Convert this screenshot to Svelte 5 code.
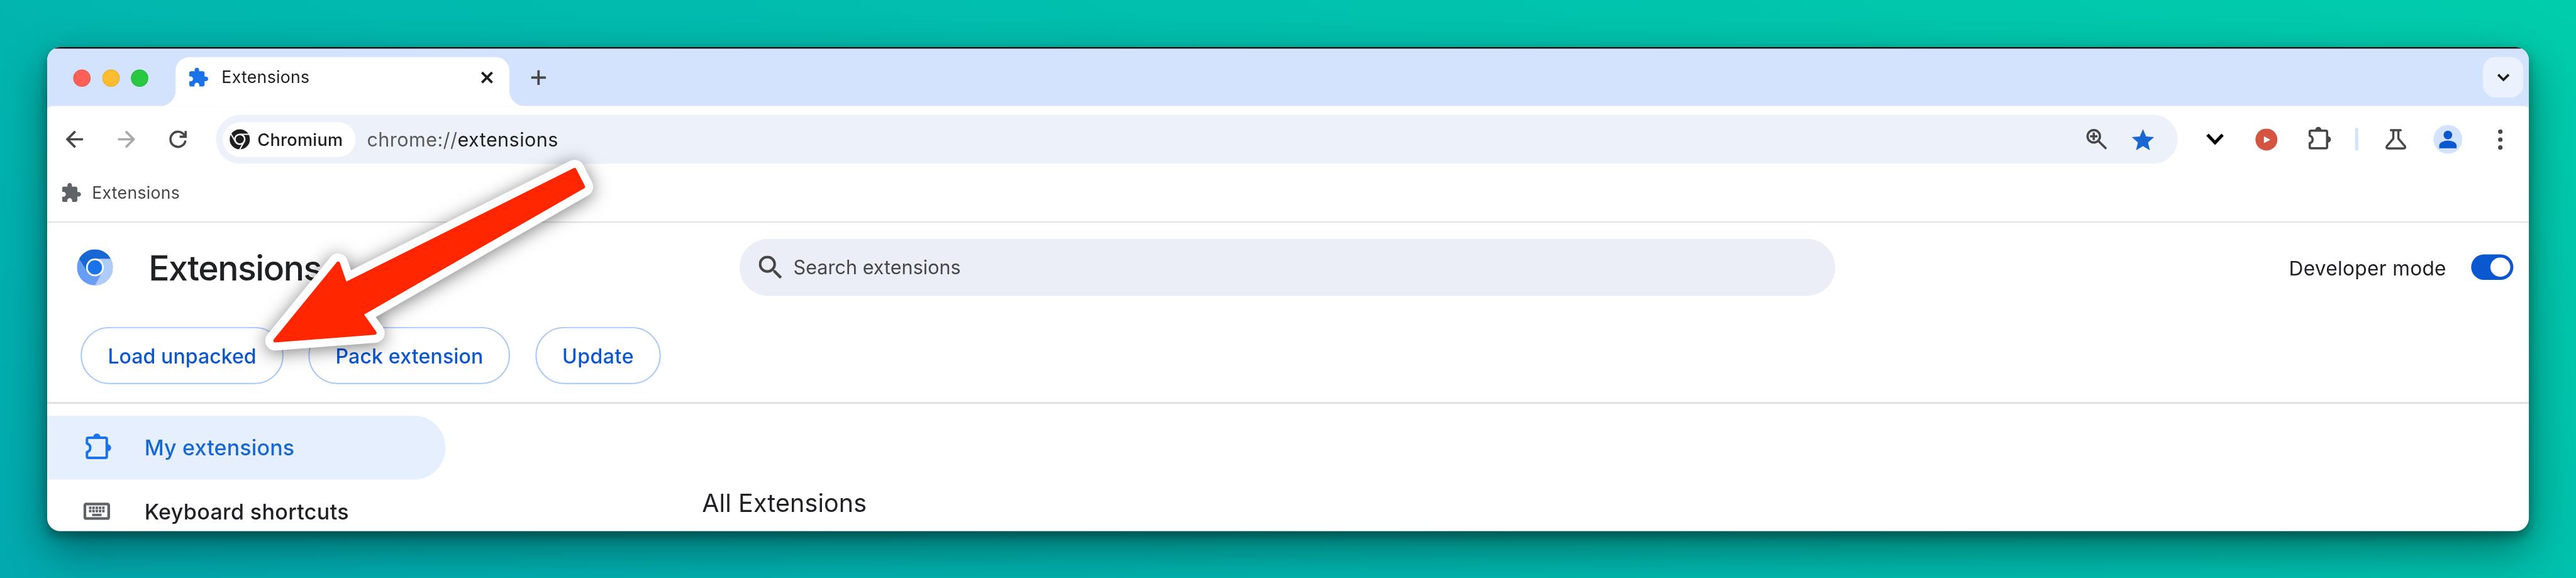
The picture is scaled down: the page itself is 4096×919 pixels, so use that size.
<script>
  const buttons = [
    { label: 'Load unpacked', width: 326.5, spacing: 0.05 },
    { label: 'Pack extension', width: 325, spacing: 0.15 },
    { label: 'Update', width: 202, spacing: 0.5 },
  ];
  const keyColumns = [143.4, 148.7, 154, 159.3, 164.6];
</script>

{#snippet puzzleFilled()}
  <svg class="puzzle" viewBox="2 1 21 21">
    <path d="M20.5 11H19V7c0-1.1-.9-2-2-2h-4V3.5C13 2.12 11.88 1 10.5 1S8 2.12 8 3.5V5H4c-1.1 0-1.99.9-1.99 2v3.8H3.5c1.49 0 2.7 1.21 2.7 2.7s-1.21 2.7-2.7 2.7H2V20c0 1.1.9 2 2 2h3.8v-1.5c0-1.49 1.21-2.7 2.7-2.7 1.49 0 2.7 1.21 2.7 2.7V22H17c1.1 0 2-.9 2-2v-4h1.5c1.38 0 2.5-1.12 2.5-2.5S21.88 11 20.5 11z" />
  </svg>
{/snippet}

{#snippet puzzleOutline()}
  <svg viewBox="0 0 38 38" class="outline">
    <path d="M2.8 14.8V8.6q0-2 2-2h24q2 0 2 2v24.4q0 2-2 2h-24q-2 0-2-2v-6.2c6.2-1.6 6.2-10.4 0-12z" fill="none" stroke="currentColor" stroke-width="3.6" stroke-linejoin="round" />
    <path d="M11.7 5.5a5 5 0 0 1 10 0zM32 15.8a5 5 0 0 1 0 10z" fill="currentColor" />
  </svg>
{/snippet}

<div class="stage">
  <div class="window">
    <div class="tabstrip">
      <div class="lights"><i class="red"></i><i class="amber"></i><i class="green"></i></div>
      <div class="tab">
        <span class="tab-icon">{@render puzzleFilled()}</span>
        <span class="tab-title">Extensions</span>
        <svg class="close" viewBox="0 0 20 20"><path d="M1.8 1.8l16.4 16.4M18.2 1.8L1.8 18.2" fill="none" stroke="#1f1f1f" stroke-width="4" /></svg>
      </div>
      <svg class="plus" viewBox="0 0 24 24"><path d="M12 0v24M0 12h24" fill="none" stroke="#474747" stroke-width="3.8" /></svg>
      <div class="tab-search">
        <svg width="22" height="14" viewBox="0 0 22 14"><path d="M2.5 2.2l8.5 8.5 8.5-8.5" fill="none" stroke="#1f1f1f" stroke-width="3.8" /></svg>
      </div>
    </div>

    <div class="toolbar">
      <svg class="nav" viewBox="106 210 28 29"><path d="M134 224.5H109M121.3 211.7l-12.8 12.8 12.8 12.8" fill="none" stroke="#474747" stroke-width="3.7" /></svg>
      <svg class="nav" viewBox="190 210 28 29"><path d="M190 224.5h25M202.7 211.7l12.8 12.8-12.8 12.8" fill="none" stroke="#a9a9a9" stroke-width="3.7" /></svg>
      <svg class="nav" viewBox="273 210 28 29"><path d="M298.9 226.5A12.2 12.2 0 1 1 297.5 218.5M299.3 211v9.4h-9.8" fill="none" stroke="#474747" stroke-width="3.7" /></svg>

      <div class="omnibox">
        <div class="chip">
          <svg width="33" height="33" viewBox="-16.5 -16.5 33 33">
            <circle r="16.3" fill="#1f1f1f" />
            <circle r="7.9" fill="none" stroke="#fff" stroke-width="2.6" />
            {#each [0, 120, 240] as turn}
              <path d="M0-8H17" fill="none" stroke="#fff" stroke-width="2" transform="rotate({turn})" />
            {/each}
          </svg>
          <span>Chromium</span>
        </div>
        <span class="url"><span class="scheme">chrome://</span>extensions</span>
        <svg class="magnify" viewBox="3362 207 35 35"><g fill="none" stroke="#474747" stroke-width="3.6"><circle cx="3374.7" cy="219.7" r="10" /><path d="M3368.7 219.7h12M3374.7 213.7v12M3381.8 226.8l13 13" /></g></svg>
        <svg class="star" viewBox="2 2 20 19"><path d="M12 17.27L18.18 21l-1.64-7.03L22 9.24l-7.19-.61L12 2 9.19 8.63 2 9.24l5.46 4.73L5.82 21z" fill="#1967d2" /></svg>
      </div>

      <svg class="chev" viewBox="3556 214 28 21"><path d="M3558 217.2l12.2 12.8 12.2-12.8" fill="none" stroke="#000" stroke-width="5.2" /></svg>
      <svg class="play" viewBox="0 0 36 36"><circle cx="18" cy="18" r="17.7" fill="#d45341" /><path d="M14 12.8l10.5 5.4-10.5 5.3z" fill="#fff" /></svg>
      <span class="ext">{@render puzzleOutline()}</span>
      <span class="divider"></span>
      <svg class="flask" viewBox="3845 207 35 35"><path d="M3854.5 209.9h16M3858.5 210v13.3L3848.1 235.6q-1.6 3.7 2.2 3.7h24.6q3.8 0 2.2-3.7L3866.7 223.3V210" fill="none" stroke="#474747" stroke-width="3.5" stroke-linecap="round" stroke-linejoin="round" /></svg>
      <svg class="avatar" viewBox="3922.5 201 47 47"><circle cx="3946" cy="224.5" r="23.3" fill="#d3e3fd" /><circle cx="3946" cy="217.5" r="7" fill="#0b57d0" /><path d="M3932 239v-4.5c0-5 8-8 14-8s14 3 14 8v4.5z" fill="#0b57d0" /></svg>
      <svg class="dots" viewBox="0 0 8 34"><circle cx="4" cy="4.2" r="3.6" /><circle cx="4" cy="17" r="3.6" /><circle cx="4" cy="29.8" r="3.6" /></svg>
    </div>

    <div class="bookmarks">
      {@render puzzleFilled()}
      <span>Extensions</span>
    </div>

    <div class="header">
      <svg class="logo" viewBox="124 401 58 58">
        <circle cx="153" cy="430" r="29" fill="#669df6" />
        <path d="M153 416h25.4A29 29 0 0 0 127.6 416L140.9 437 153 430z" fill="#1967d2" />
        <path d="M153 416h25.4A29 29 0 0 1 153 459L165.1 437 153 430z" fill="#aecbfa" />
        <circle cx="153" cy="430" r="14.3" fill="#fff" />
        <circle cx="153" cy="430" r="11.5" fill="#1a73e8" />
      </svg>
      <h1>Extensions</h1>
      <div class="search">
        <svg viewBox="3 3 17.5 17.5"><path d="M15.5 14h-.79l-.28-.27A6.471 6.471 0 0 0 16 9.5 6.5 6.5 0 1 0 9.5 16c1.61 0 3.09-.59 4.23-1.57l.27.28v.79l5 4.99L20.49 19l-4.99-5zm-6 0C7.01 14 5 11.99 5 9.5S7.01 5 9.5 5 14 7.01 14 9.5 11.99 14 9.5 14z" fill="#474747" /></svg>
        <span>Search extensions</span>
      </div>
      <span class="dev">Developer mode</span>
      <div class="toggle"><i></i></div>
    </div>

    <div class="actions">
      {#each buttons as b}
        <button style="width: {b.width}px; letter-spacing: {b.spacing}px">{b.label}</button>
      {/each}
    </div>

    <div class="content">
      <nav>
        <div class="item active">
          <span class="item-icon">{@render puzzleOutline()}</span>
          <span class="item-label">My extensions</span>
        </div>
        <div class="item keys">
          <span class="item-icon">
            <svg width="44" height="30" viewBox="134 808.3 44 30">
              <rect x="136.8" y="811.7" width="38.4" height="23.3" rx="2" fill="none" stroke="#5f6368" stroke-width="4.4" />
              {#each keyColumns as x}
                <rect {x} y="815.7" width="4" height="4.2" fill="#5f6368" />
                <rect {x} y="820.9" width="4" height="4.2" fill="#5f6368" />
              {/each}
              <rect x="148.5" y="827.3" width="15.2" height="3.8" fill="#5f6368" />
            </svg>
          </span>
          <span class="item-label">Keyboard shortcuts</span>
        </div>
      </nav>
      <h2>All Extensions</h2>
    </div>
  </div>

  <svg class="arrow" viewBox="400 220 620 400">
    <g stroke-linejoin="round">
      <path d="M443.5 549L545 424.5 556.5 458 926 273.5 940 301 582.5 506 604 536.5z" fill="#fff" stroke="#fff" stroke-width="32" />
      <path d="M443.5 549L545 424.5 556.5 458 926 273.5 940 301 582.5 506 604 536.5z" fill="#ff2600" stroke="#ff2600" stroke-width="6" />
    </g>
  </svg>
</div>

<style>
  :global(body) {
    overflow: hidden;
  }
  .stage {
    position: relative;
    box-sizing: border-box;
    width: 4152px;
    height: 932px;
    padding: 76px;
    transform: scale(0.98652);
    transform-origin: 0 0;
    background: linear-gradient(24deg, #02aab0, #00cdac);
    font-family: Inter, 'Liberation Sans', sans-serif;
    color: #1f1f1f;
    white-space: nowrap;
  }
  .stage :global(svg) {
    display: block;
    flex: none;
  }
  .window {
    display: flex;
    flex-direction: column;
    height: 780px;
    border-radius: 21px;
    overflow: hidden;
    background: #fff;
    box-shadow: 0 28px 72px rgba(0, 0, 0, 0.42), 0 8px 16px rgba(0, 0, 0, 0.32);
  }

  .tabstrip {
    display: flex;
    flex: none;
    box-sizing: border-box;
    height: 95px;
    border-top: 2px solid #000;
    box-shadow: inset 0 1px #a9b0bf;
    background: #d3e2fd;
  }
  .lights {
    display: flex;
    gap: 18.5px;
    margin: 34px 0 0 42px;
    width: 165px;
  }
  .lights i {
    width: 28px;
    height: 28px;
    border-radius: 50%;
    box-shadow: inset 0 0 0 1px rgba(0, 0, 0, 0.1);
  }
  .red { background: #ff5f57; }
  .amber { background: #febc2e; }
  .green { background: #28c840; }
  .tab {
    position: relative;
    display: flex;
    align-items: center;
    box-sizing: border-box;
    width: 538px;
    height: 79px;
    margin-top: 14px;
    padding: 0 26px 14px 22px;
    border-radius: 22px 22px 0 0;
    background: #fff;
  }
  .tab::before,
  .tab::after {
    content: '';
    position: absolute;
    bottom: 0;
    width: 25px;
    height: 25px;
  }
  .tab::before {
    left: -25px;
    background: radial-gradient(circle at 0 0, transparent 24.5px, #fff 25.5px);
  }
  .tab::after {
    right: -25px;
    background: radial-gradient(circle at 100% 0, transparent 24.5px, #fff 25.5px);
  }
  .puzzle {
    width: 30.5px;
    height: 30.5px;
    fill: currentColor;
  }
  .tab-icon { color: #1a73e8; }
  .tab-title {
    flex: 1;
    margin-left: 21.7px;
    font-size: 27px;
    letter-spacing: 0.3px;
  }
  .close {
    width: 20px;
    height: 20px;
  }
  .plus {
    width: 24px;
    height: 24px;
    margin: 34.7px 0 0 34.7px;
  }
  .tab-search {
    display: flex;
    align-items: center;
    justify-content: center;
    width: 65px;
    height: 65px;
    margin: 14px 9px 0 auto;
    border-radius: 20px;
    background: #ebf2fe;
  }

  .toolbar {
    display: flex;
    flex: none;
    align-items: center;
    height: 79px;
    padding: 14px 42px 0 30px;
    background:
      radial-gradient(ellipse 11px 5px at 11px 5px, #fff 96%, transparent) 0 0 / 11px 5px no-repeat,
      radial-gradient(ellipse 11px 5px at 0 5px, #fff 96%, transparent) 100% 0 / 11px 5px no-repeat,
      linear-gradient(#d3e2fd, #d3e2fd) 0 0 / 11px 5px no-repeat,
      linear-gradient(#d3e2fd, #d3e2fd) 100% 0 / 11px 5px no-repeat,
      #fff;
  }
  .nav {
    width: 28px;
    height: 29px;
    margin-right: 55.7px;
  }
  .omnibox {
    display: flex;
    align-items: center;
    box-sizing: border-box;
    width: 3162px;
    height: 79px;
    margin-left: -9.5px;
    padding: 0 38px 0 11px;
    border-radius: 40px;
    background: #ecf1fa;
  }
  .chip {
    display: flex;
    align-items: center;
    box-sizing: border-box;
    width: 214px;
    height: 56px;
    padding-left: 11.5px;
    border-radius: 28px;
    background: #fff;
    font-size: 27.5px;
    font-weight: 500;
    letter-spacing: 0.29px;
  }
  .chip span { margin-left: 11.8px; }
  .url {
    margin-left: 18.8px;
    font-size: 31px;
    letter-spacing: 0.42px;
  }
  .scheme { color: #5a5a5a; }
  .magnify {
    width: 35px;
    height: 35px;
    margin-left: auto;
  }
  .star {
    width: 36px;
    height: 34.2px;
    margin: 2px 0 0 38.7px;
  }
  .chev {
    width: 28px;
    height: 21px;
    margin-left: 46px;
  }
  .play {
    width: 36px;
    height: 36px;
    margin-left: 51.5px;
  }
  .ext {
    width: 38px;
    height: 38px;
    margin: -4px 0 0 48.5px;
    color: #474747;
  }
  .divider {
    width: 5px;
    height: 37px;
    margin-left: 38.5px;
    border-radius: 2.5px;
    background: #d3e3fd;
  }
  .flask {
    width: 35px;
    height: 35px;
    margin-left: 43px;
  }
  .avatar {
    width: 47px;
    height: 47px;
    margin-left: 42.5px;
  }
  .dots {
    width: 8px;
    height: 34px;
    margin-left: auto;
    fill: #474747;
  }

  .bookmarks {
    display: flex;
    flex: none;
    align-items: center;
    height: 93px;
    padding-left: 24px;
    border-bottom: 2px solid #e0e1e3;
    color: #5f6368;
  }
  .bookmarks span {
    margin-left: 17.7px;
    font-size: 27px;
    letter-spacing: 0.3px;
    color: #474747;
  }

  .header {
    display: flex;
    flex: none;
    align-items: center;
    height: 143px;
    padding: 0 25px 0 48px;
  }
  .logo {
    width: 58px;
    height: 58px;
  }
  h1 {
    width: 952.3px;
    margin: 3px 0 0 57.4px;
    font-size: 56px;
    font-weight: 540;
    letter-spacing: -1.45px;
    color: #202124;
  }
  .search {
    display: flex;
    align-items: center;
    box-sizing: border-box;
    width: 1766.3px;
    height: 92px;
    padding-left: 31.5px;
    border-radius: 46px;
    background: #ebeef7;
    font-size: 31px;
    color: #474747;
  }
  .search svg {
    width: 37.3px;
    height: 37.3px;
  }
  .search span { margin-left: 18.3px; }
  .dev {
    margin: 3px 40px 0 auto;
    font-size: 32px;
    letter-spacing: 0.35px;
    color: #202124;
  }
  .toggle {
    display: flex;
    align-items: center;
    justify-content: flex-end;
    box-sizing: border-box;
    width: 68px;
    height: 41px;
    padding-right: 5.5px;
    border-radius: 21px;
    background: #0b57d0;
  }
  .toggle i {
    width: 32px;
    height: 31px;
    border-radius: 50%;
    background: #fff;
  }

  .actions {
    display: flex;
    flex: none;
    gap: 40.6px;
    box-sizing: border-box;
    height: 149px;
    padding: 25px 0 0 54.3px;
    border-bottom: 3px solid #dddee2;
  }
  button {
    height: 92px;
    padding: 3px 0 0;
    border: 2px solid #a8c7fa;
    border-radius: 46px;
    background: #fff;
    color: #0b57d0;
    font: 550 32.5px Inter, 'Liberation Sans', sans-serif;
  }

  .content {
    display: flex;
    flex: 1;
    min-height: 0;
  }
  nav {
    width: 642px;
    padding-top: 19px;
  }
  .item {
    display: flex;
    align-items: center;
    box-sizing: border-box;
    height: 102.5px;
    padding-left: 58px;
    font-size: 34.5px;
    font-weight: 540;
    color: #202124;
  }
  .active {
    border-radius: 0 51px 51px 0;
    background: #e6effe;
    color: #1967d2;
    letter-spacing: 0.15px;
  }
  .keys { letter-spacing: 0.35px; }
  .item-icon {
    width: 46px;
    color: #1a73e8;
  }
  .active .item-icon :global(svg) {
    width: 43.3px;
    height: 43.3px;
    margin: -4px 0 0 2.5px;
  }
  .item-label {
    margin: 1px 0 0 52.8px;
  }
  h2 {
    margin: 135px 0 0 413.5px;
    font-size: 40px;
    line-height: 50px;
    font-weight: 400;
    letter-spacing: 0.1px;
    color: #202124;
  }

  .arrow {
    position: absolute;
    left: 400px;
    top: 220px;
    width: 620px;
    height: 400px;
    overflow: visible;
    filter: drop-shadow(0 4px 14px rgba(0, 0, 0, 0.5));
  }
</style>
